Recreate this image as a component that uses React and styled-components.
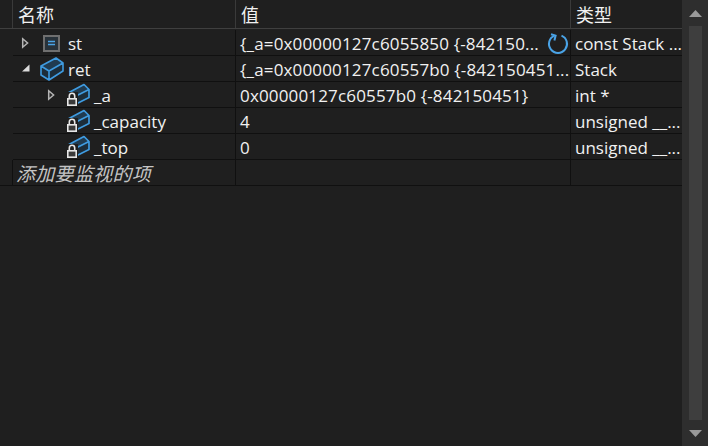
import React from "react";
import styled, { createGlobalStyle } from "styled-components";

const Global = createGlobalStyle`
  html, body { margin: 0; padding: 0; background: #1f1f1f; overflow: hidden; }
  #root { width: 708px; height: 446px; }
`;

const Shell = styled.div`
  width: 708px;
  height: 446px;
  display: flex;
  background: #1f1f1f;
  color: #f1f1f1;
  font-family: "Open Sans", "Noto Sans", "Noto Sans CJK SC", sans-serif;
  font-size: 17px;
`;
const Pane = styled.div`
  width: 682px;
  flex: none;
  display: flex;
  flex-direction: column;
`;
const grid = `display: grid; grid-template-columns: 13px 223px 335px 111px;`;
const Header = styled.div`
  ${grid}
  height: 28px;
  border-bottom: 1px solid #3f3f3f;
  margin-bottom: 1px;
`;
const HeadCell = styled.div`
  border-right: ${(p) => (p.$last ? 0 : "1px solid #3a3a3a")};
  box-sizing: border-box;
  padding-left: ${(p) => p.$pad ?? 5}px;
  font-family: "Noto Sans CJK SC", sans-serif;
  font-size: 18px;
  line-height: 28px;
  color: #f1f1f1;
`;
const Row = styled.div`
  ${grid}
  height: 26px;
`;
const Gutter = styled.div`
  box-sizing: border-box;
  border-right: ${(p) => (p.$closing ? "1px solid #101010" : 0)};
  border-bottom: ${(p) => (p.$closing ? "1px solid #101010" : 0)};
`;
const Cell = styled.div`
  box-sizing: border-box;
  border-bottom: 1px solid #101010;
  border-right: ${(p) => (p.$last ? 0 : "1px solid #101010")};
  height: 26px;
  line-height: 27px;
  white-space: nowrap;
  overflow: hidden;
  display: flex;
  align-items: flex-start;
  padding-left: 4px;
  position: relative;
`;
const ValueCell = styled(Cell)`
  letter-spacing: 0.16px;
`;
const NameCell = styled(Cell)`
  padding-left: 0;
`;
const Arrow = styled.span`
  width: 10px;
  height: 25px;
  flex: none;
  margin-left: ${(p) => p.$left}px;
  display: flex;
  align-items: center;
`;
const IconSlot = styled.span`
  width: 26px;
  height: 25px;
  flex: none;
  margin-left: ${(p) => p.$left}px;
  display: flex;
`;
const Label = styled.span`
  margin-left: ${(p) => p.$left ?? 0}px;
`;
const AddLabel = styled.div`
  box-sizing: border-box;
  border-right: 1px solid #101010;
  border-bottom: 1px solid #101010;
  height: 26px;
  font-family: "Noto Sans CJK SC", sans-serif;
  font-style: italic;
  font-size: 19px;
  letter-spacing: 0.3px;
  line-height: 25px;
  padding-left: 3px;
  color: #c4c4c4;
  white-space: nowrap;
  overflow: hidden;
`;
const Spinner = styled.svg`
  position: absolute;
  right: 1px;
  top: 3px;
`;
const Scrollbar = styled.div`
  width: 26px;
  flex: none;
  background: #2e2e2e;
  display: flex;
  flex-direction: column;
  align-items: center;
`;
const ScrollArrow = styled.svg`
  flex: none;
  margin: ${(p) => p.$margin};
`;
const Thumb = styled.div`
  width: 13px;
  flex: 1;
  background: #3e3e3e;
`;

const ClosedArrow = () => (
  <svg width="10" height="12" viewBox="0 0 10 12">
    <path d="M2.7 1.8 L7.6 6 L2.7 10.2 Z" fill="#262626" stroke="#b4b4b4" strokeWidth="1.5" />
  </svg>
);
const OpenArrow = () => (
  <svg width="10" height="12" viewBox="0 0 10 12">
    <path d="M2 8.5 L9.5 8.5 L9.5 1.5 Z" fill="#dcdcdc" />
  </svg>
);
const Struct = () => (
  <svg width="26" height="25" viewBox="0 0 26 25">
    <path d="M2 10 L17 2 L24 7 L24 15 L10 24 L2 19 Z" fill="#1c2d3a" />
    <path d="M2 10 L17 2 L24 7 L10 15 Z" fill="#203b50" />
    <path d="M2 10 L17 2 L24 7 L24 15 L10 24 L2 19 Z M2 10 L10 15 L24 7 M10 15 L10 24" fill="none" stroke="#3f9be0" strokeWidth="1.6" strokeLinejoin="round" />
  </svg>
);
const LockedField = () => (
  <svg width="26" height="25" viewBox="0 0 26 25">
    <path d="M2 11 L18 2.5 L23 7.5 L23 15.5 L11 21.5 L2 17 Z" fill="#1c2d3a" />
    <path d="M2 11 L18 2.5 L23 7.5 L11 13.5 Z" fill="#203b50" />
    <path d="M2 11 L18 2.5 L23 7.5 L23 15.5 L11 21.5 M11 13.5 L23 7.5" fill="none" stroke="#3f9be0" strokeWidth="1.7" strokeLinejoin="round" />
    <rect x="0" y="10" width="12" height="15" fill="#1f1f1f" />
    <path d="M3.3 16 V14 A2.7 2.7 0 0 1 8.7 14 V16" fill="none" stroke="#e6e6e6" strokeWidth="1.6" />
    <rect x="1.8" y="16.8" width="8.4" height="6.4" fill="#3a3a3a" stroke="#e6e6e6" strokeWidth="1.6" />
  </svg>
);
const Variable = () => (
  <svg width="26" height="25" viewBox="0 0 26 25">
    <rect x="5" y="6" width="15" height="15" fill="#28323a" stroke="#6f6f6f" strokeWidth="2" />
    <path d="M9 11.5 H16 M9 14.5 H16" stroke="#4aa3e6" strokeWidth="1.3" />
  </svg>
);

const rows = [
  { arrow: "closed", aLeft: 7, icon: <Variable />, iLeft: 9, name: "st", nLeft: 3, value: "{_a=0x00000127c6055850 {-842150...", type: "const Stack ...", spin: true },
  { arrow: "open", aLeft: 7, icon: <Struct />, iLeft: 9, name: "ret", nLeft: 3, value: "{_a=0x00000127c60557b0 {-842150451...", type: "Stack" },
  { arrow: "closed", aLeft: 33, icon: <LockedField />, iLeft: 10, name: "_a", nLeft: 2, value: "0x00000127c60557b0 {-842150451}", type: "int *" },
  { arrow: null, aLeft: 33, icon: <LockedField />, iLeft: 10, name: "_capacity", nLeft: 2, value: "4", type: "unsigned __..." },
  { arrow: null, aLeft: 33, icon: <LockedField />, iLeft: 10, name: "_top", nLeft: 2, value: "0", type: "unsigned __..." },
];

export default function App() {
  return (
    <Shell>
      <Global />
      <Pane>
        <Header>
          <HeadCell $pad={0} />
          <HeadCell>名称</HeadCell>
          <HeadCell>值</HeadCell>
          <HeadCell $last>类型</HeadCell>
        </Header>
        {rows.map((r) => (
          <Row key={r.name}>
            <Gutter />
            <NameCell>
              <Arrow $left={r.aLeft}>
                {r.arrow === "closed" && <ClosedArrow />}
                {r.arrow === "open" && <OpenArrow />}
              </Arrow>
              <IconSlot $left={r.iLeft}>{r.icon}</IconSlot>
              <Label $left={r.nLeft}>{r.name}</Label>
            </NameCell>
            <ValueCell>
              {r.value}
              {r.spin && (
                <Spinner width="22" height="22" viewBox="0 0 22 22">
                  <path d="M7.5 2.6 A9 9 0 1 0 14.5 2.6" fill="none" stroke="#4aa3e6" strokeWidth="2" />
                  <path d="M4 1.2 L8.6 2.6 L7.4 7.4" fill="none" stroke="#4aa3e6" strokeWidth="2" />
                </Spinner>
              )}
            </ValueCell>
            <Cell $last>{r.type}</Cell>
          </Row>
        ))}
        <Row>
          <Gutter $closing />
          <AddLabel>添加要监视的项</AddLabel>
          <Cell />
          <Cell $last />
        </Row>
      </Pane>
      <Scrollbar>
        <ScrollArrow $margin="10px 0 9px" width="13" height="7" viewBox="0 0 13 7">
          <path d="M6.5 0 L13 7 L0 7 Z" fill="#9a9a9a" />
        </ScrollArrow>
        <Thumb />
        <ScrollArrow $margin="10px 0 9px" width="13" height="7" viewBox="0 0 13 7">
          <path d="M0 0 L13 0 L6.5 7 Z" fill="#9a9a9a" />
        </ScrollArrow>
      </Scrollbar>
    </Shell>
  );
}
